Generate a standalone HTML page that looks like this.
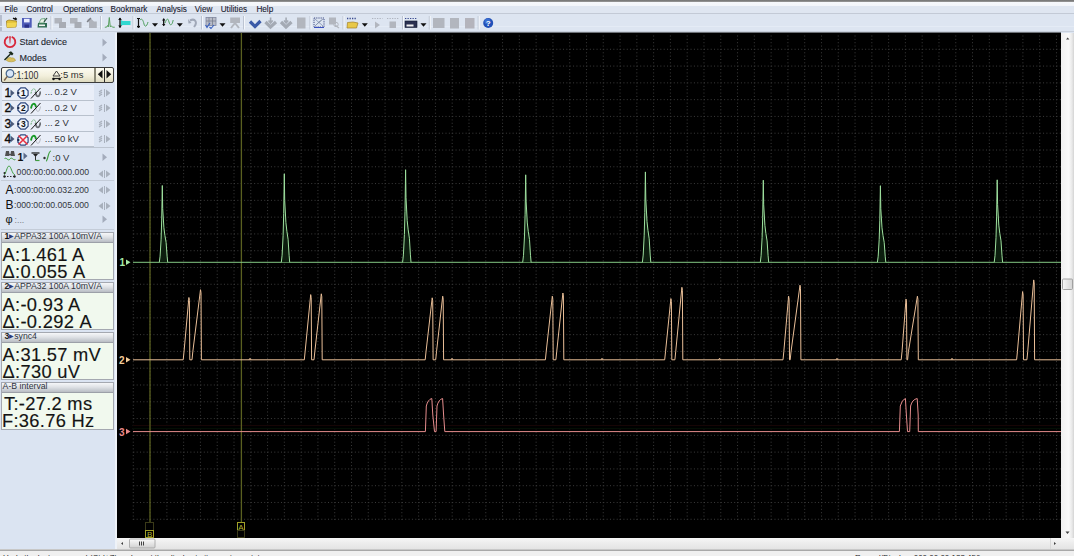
<!DOCTYPE html>
<html><head><meta charset="utf-8"><style>
*{box-sizing:border-box}
body{margin:0;width:1074px;height:556px;overflow:hidden;position:relative;background:#dbe4f2;font-family:"Liberation Sans",sans-serif;}
.a{position:absolute;white-space:nowrap}
</style></head><body>
<div class="a" style="left:0;top:0;width:1074px;height:2px;background:linear-gradient(#707070,#9a9a9a)"></div>
<div class="a" style="left:0;top:2px;width:1074px;height:11px;background:linear-gradient(#f6f8fc 0,#f2f5fa 35%,#dfe6f1 40%,#dfe6f1 100%)"></div>
<div class="a" style="left:0;top:13px;width:1074px;height:1px;background:#c3cad6"></div>
<div class="a" style="left:0;top:14px;width:1074px;height:19px;background:#dde5f1"></div>
<div class="a" style="left:4.5px;top:3.8px;font-size:8.2px;line-height:11px;color:#202030;-webkit-text-stroke:0.1px #202030">File</div><div class="a" style="left:26.4px;top:3.8px;font-size:8.2px;line-height:11px;color:#202030;-webkit-text-stroke:0.1px #202030">Control</div><div class="a" style="left:62.9px;top:3.8px;font-size:8.2px;line-height:11px;color:#202030;-webkit-text-stroke:0.1px #202030">Operations</div><div class="a" style="left:110.6px;top:3.8px;font-size:8.2px;line-height:11px;color:#202030;-webkit-text-stroke:0.1px #202030">Bookmark</div><div class="a" style="left:156.4px;top:3.8px;font-size:8.2px;line-height:11px;color:#202030;-webkit-text-stroke:0.1px #202030">Analysis</div><div class="a" style="left:194.8px;top:3.8px;font-size:8.2px;line-height:11px;color:#202030;-webkit-text-stroke:0.1px #202030">View</div><div class="a" style="left:220.7px;top:3.8px;font-size:8.2px;line-height:11px;color:#202030;-webkit-text-stroke:0.1px #202030">Utilities</div><div class="a" style="left:256.4px;top:3.8px;font-size:8.2px;line-height:11px;color:#202030;-webkit-text-stroke:0.1px #202030">Help</div>
<svg class="a" style="left:0;top:0" width="1074" height="33" viewBox="0 0 1074 33"><line x1="1" y1="15" x2="1" y2="31" stroke="#a8b0c0" stroke-width="1.5"/><line x1="0" y1="26.5" x2="1074" y2="26.5" stroke="#e4ebf5" stroke-width="1"/><line x1="0" y1="31.5" x2="1074" y2="31.5" stroke="#c8d0dc" stroke-width="1"/><path d="M6.5,21 L9,20 L12,20.5 L16.5,21 L16,27 L7,27.5 Z" fill="#e3c23a" stroke="#a08020" stroke-width="0.8"/><path d="M7,23 L17,22.5 L15.5,27 L7,27.5Z" fill="#f2d650"/><path d="M13,18.2 L16.5,19.8 M15,17.8 L16.8,19.5" stroke="#101010" stroke-width="1.4"/><rect x="22" y="18" width="9.7" height="9.7" fill="#4f5cb8"/><rect x="24" y="18.8" width="5.6" height="3.6" fill="#e8ecff"/><rect x="24.5" y="24.5" width="4.5" height="3.2" fill="#2a3088"/><path d="M38,23 L47,23 L47,27.5 L37.5,27.5Z" fill="#2f6c52"/><rect x="39" y="24.5" width="6" height="1.6" fill="#f0f4f0"/><path d="M39,23 L41,19 L45,18.5 L44,23Z" fill="#e8f0e8" stroke="#5a9a70" stroke-width="0.8"/><path d="M44,22 L47,18" stroke="#305040" stroke-width="1.2"/><line x1="51" y1="16" x2="51" y2="29.5" stroke="#bcc4d2" stroke-width="1"/><line x1="52" y1="16" x2="52" y2="29.5" stroke="#f4f7fb" stroke-width="1"/><rect x="54.5" y="18" width="7.5" height="5.5" fill="#b0b4bc"/><rect x="59.0" y="22" width="7" height="6" fill="#a8acb4"/><rect x="70" y="18" width="7.5" height="5.5" fill="#b0b4bc"/><rect x="74.5" y="22" width="7" height="6" fill="#a8acb4"/><path d="M87,20 L90,17.8 L94,21.5 L96.8,21.5 L96.8,28 L89,28 L89,22.5Z" fill="#b0b4bc"/><path d="M87,22 L91,18" stroke="#7c8088" stroke-width="1.2"/><line x1="100.5" y1="16" x2="100.5" y2="29.5" stroke="#bcc4d2" stroke-width="1"/><line x1="101.5" y1="16" x2="101.5" y2="29.5" stroke="#f4f7fb" stroke-width="1"/><path d="M104.8,27.2 L106.5,27.2 L107.5,25.5 L108.3,27 L109.3,17.5 L110.3,27 L111.3,25.8 L112.5,27.2 L114.8,27.2" fill="none" stroke="#5aa060" stroke-width="1"/><rect x="121.5" y="21" width="9" height="4" fill="#30d8d0"/><path d="M121,20 L126,23 L121,26Z" fill="#30d8d0"/><path d="M120,18 L120,27.5" stroke="#101010" stroke-width="1.3"/><path d="M118.2,20 L120,17.5 L121.8,20Z M118.2,25.5 L120,28 L121.8,25.5Z" fill="#101010"/><line x1="133" y1="16" x2="133" y2="29.5" stroke="#bcc4d2" stroke-width="1"/><line x1="134" y1="16" x2="134" y2="29.5" stroke="#f4f7fb" stroke-width="1"/><path d="M137,18.5 L140,18.5 M138.5,18.5 L138.5,26.5 M137,26.5 L140,26.5" stroke="#101010" stroke-width="1.2"/><circle cx="138.5" cy="26.8" r="1.2" fill="#101010"/><path d="M140,20 C142,18 143,20 144,24 C145,28 147,26 148,22" fill="none" stroke="#50a060" stroke-width="1"/><path d="M152,23.2 L158,23.2 L155,26.8 Z" fill="#101010"/><path d="M163.7,18.8 L163.7,25.5" stroke="#101010" stroke-width="1.3"/><path d="M162,20.5 L163.7,18.3 L165.4,20.5Z M162,24 L163.7,26.2 L165.4,24Z" fill="#101010"/><path d="M165,23 C167,18 168,18 169,22 C170,26 172,26 173.2,20" fill="none" stroke="#50a060" stroke-width="1"/><path d="M176.8,23.2 L182.8,23.2 L179.8,26.8 Z" fill="#101010"/><path d="M190,20.5 C195,18 198,22 194,27" fill="none" stroke="#a0a8b8" stroke-width="2"/><path d="M188,19 L191.5,23 L188.5,23.5Z" fill="#a0a8b8"/><line x1="201.5" y1="16" x2="201.5" y2="29.5" stroke="#bcc4d2" stroke-width="1"/><line x1="202.5" y1="16" x2="202.5" y2="29.5" stroke="#f4f7fb" stroke-width="1"/><rect x="206" y="17.5" width="10" height="8" fill="#b8bcc8" stroke="#8088a0" stroke-width="0.8"/><path d="M206,21 L216,21 M209,17.5 L209,25.5 M212.5,17.5 L212.5,25.5" stroke="#70788a" stroke-width="0.7"/><path d="M205.5,25 L207,27.5 L210,23 M209.5,27 L211,28.5 L214,25" fill="none" stroke="#3860c0" stroke-width="1.1"/><path d="M219.5,23.2 L225.5,23.2 L222.5,26.8 Z" fill="#101010"/><rect x="230.2" y="17.5" width="9.8" height="5.5" fill="#b2b6be"/><path d="M231,28 L235,23 L239,28" fill="none" stroke="#b2b6be" stroke-width="2"/><line x1="243.5" y1="16" x2="243.5" y2="29.5" stroke="#bcc4d2" stroke-width="1"/><line x1="244.5" y1="16" x2="244.5" y2="29.5" stroke="#f4f7fb" stroke-width="1"/><path d="M250,21.5 L255,26.5 L260.5,21" fill="none" stroke="#3a5aa8" stroke-width="3.2"/><path d="M265.5,22 L270.5,27 L276,22" fill="none" stroke="#a4aab4" stroke-width="3.2"/><path d="M270.6,17.5 L270.6,22 M268.5,20.5 L270.6,23 L272.7,20.5" fill="none" stroke="#a4aab4" stroke-width="1.6"/><path d="M281,22 L286,27 L291.5,22" fill="none" stroke="#a4aab4" stroke-width="3.2"/><path d="M286.1,17.5 L286.1,22 M284,20.5 L286.1,23 L288.2,20.5" fill="none" stroke="#a4aab4" stroke-width="1.6"/><rect x="297" y="17.5" width="8.5" height="11" fill="#b2b6be"/><line x1="310" y1="16" x2="310" y2="29.5" stroke="#bcc4d2" stroke-width="1"/><line x1="311" y1="16" x2="311" y2="29.5" stroke="#f4f7fb" stroke-width="1"/><rect x="314" y="18" width="10" height="9" fill="none" stroke="#2c3a78" stroke-width="0.9" stroke-dasharray="1.2 1"/><path d="M315,26 L319,22 L323,19 M315,19 L323,26" stroke="#8090b0" stroke-width="0.8"/><line x1="314" y1="27.5" x2="324" y2="27.5" stroke="#3a50c0" stroke-width="1"/><rect x="329" y="17.5" width="7" height="7" fill="#b2b6be"/><path d="M335,25 L339,28" stroke="#b2b6be" stroke-width="1.3"/><circle cx="336" cy="24.5" r="2.2" fill="none" stroke="#b2b6be" stroke-width="1"/><line x1="343" y1="16" x2="343" y2="29.5" stroke="#bcc4d2" stroke-width="1"/><line x1="344" y1="16" x2="344" y2="29.5" stroke="#f4f7fb" stroke-width="1"/><path d="M347,18.5 L357,18.5" stroke="#3a4a90" stroke-width="1.3" stroke-dasharray="1.3 1.2"/><path d="M347.5,22.5 L353,22 L358,23 L356.5,28 L347,28Z" fill="#e8c848" stroke="#a08028" stroke-width="0.7"/><path d="M361.8,23.2 L367.8,23.2 L364.8,26.8 Z" fill="#101010"/><path d="M372,18.5 L382.5,18.5" stroke="#b0b4c0" stroke-width="1.1" stroke-dasharray="1.3 1.2"/><path d="M375,21.5 L380,25 L375,28.5Z" fill="#b2b6be"/><path d="M387,18.5 L399,18.5" stroke="#b0b4c0" stroke-width="1.1" stroke-dasharray="1.3 1.2"/><rect x="389.5" y="21.5" width="6.5" height="6.5" fill="#b2b6be"/><line x1="402.5" y1="16" x2="402.5" y2="29.5" stroke="#bcc4d2" stroke-width="1"/><line x1="403.5" y1="16" x2="403.5" y2="29.5" stroke="#f4f7fb" stroke-width="1"/><path d="M405,18.5 L417,18.5" stroke="#3a4a90" stroke-width="1.1" stroke-dasharray="1.3 1.2"/><rect x="405" y="21" width="12" height="6.5" fill="#2a3050" stroke="#101830" stroke-width="0.6"/><rect x="406.5" y="24.5" width="7" height="2" fill="#f0f0f0"/><path d="M420.5,23.2 L426.5,23.2 L423.5,26.8 Z" fill="#101010"/><line x1="429.3" y1="16" x2="429.3" y2="29.5" stroke="#bcc4d2" stroke-width="1"/><line x1="430.3" y1="16" x2="430.3" y2="29.5" stroke="#f4f7fb" stroke-width="1"/><rect x="433" y="18" width="11.5" height="10" fill="#b2b6be"/><rect x="450" y="18" width="9" height="10.5" fill="#b2b6be"/><rect x="465" y="18" width="9.5" height="10.5" fill="#b4b4bc"/><line x1="478.2" y1="16" x2="478.2" y2="29.5" stroke="#bcc4d2" stroke-width="1"/><line x1="479.2" y1="16" x2="479.2" y2="29.5" stroke="#f4f7fb" stroke-width="1"/><circle cx="488.2" cy="23" r="5" fill="#2050b8"/><circle cx="487.5" cy="21.5" r="3" fill="#4a80e0" opacity="0.6"/><text x="488.2" y="26.2" font-family="Liberation Sans" font-size="8" font-weight="bold" text-anchor="middle" fill="#fff">?</text></svg>
<div class="a" style="left:114.5px;top:33px;width:2.5px;height:516px;background:#eef2f8"></div><svg class="a" style="left:3px;top:35px" width="14" height="14" viewBox="0 0 14 14">
<path d="M5.3,1.8 A5.3,5.3 0 1 0 8.7,1.8" fill="none" stroke="#d8283a" stroke-width="1.9"/>
<path d="M6.1,1.2 L7.9,1.2 L7.3,8.6 L6.7,8.6 Z" fill="#d8283a"/></svg><div class="a" style="left:19.60px;top:37.45px;font-size:9px;line-height:10.05px;color:#22262e;-webkit-text-stroke:0.1px #22262e">Start device</div><div class="a" style="left:19.60px;top:52.56px;font-size:9px;line-height:10.05px;color:#22262e;-webkit-text-stroke:0.1px #22262e">Modes</div><svg class="a" style="left:3px;top:50px" width="14" height="14" viewBox="0 0 14 14">
<path d="M3.5,10.5 C4,7.5 7,7 8.5,8 C10,7.5 12,8.5 12.5,10.5 C11,12 6,12.5 3.5,10.5 Z" fill="#d8c060" stroke="#b09838" stroke-width="0.6"/>
<path d="M1.5,10 L7.5,4" stroke="#1a2a1a" stroke-width="1.5"/>
<path d="M5.5,2.5 L8,1.2 L10.5,3.8 L9,5.5 Z" fill="#1a2a1a"/></svg><svg class="a" style="left:102px;top:38px" width="6" height="9"><path d="M0.5,0.5 L5,4.5 L0.5,8.5Z" fill="#a4acbc"/></svg><svg class="a" style="left:102px;top:53px" width="6" height="9"><path d="M0.5,0.5 L5,4.5 L0.5,8.5Z" fill="#a4acbc"/></svg><div class="a" style="left:1px;top:67px;width:113px;height:16px;border:1px solid #3c3c3c;border-radius:2px;background:linear-gradient(#fcfbf2,#f3f0dc 55%,#dedac0)"></div><div class="a" style="left:94px;top:68px;width:2px;height:14px;background:#8c8a78"></div><div class="a" style="left:104px;top:68px;width:1px;height:14px;background:#2c2c2c"></div><svg class="a" style="left:97px;top:70px" width="6" height="9"><path d="M5.5,0 L0.8,4.2 L5.5,8.4Z" fill="#101010"/></svg><svg class="a" style="left:106px;top:70px" width="6" height="9"><path d="M0.5,0 L5.2,4.2 L0.5,8.4Z" fill="#101010"/></svg><svg class="a" style="left:3px;top:68px" width="12" height="14" viewBox="0 0 12 14">
<circle cx="7" cy="5.5" r="3.8" fill="#d8e6f8" stroke="#4a6a90" stroke-width="1.3"/>
<line x1="4.3" y1="8.3" x2="1.2" y2="12.5" stroke="#7a6048" stroke-width="1.4"/></svg><div class="a" style="left:14.00px;top:69.77px;font-size:10.2px;line-height:11.39px;color:#2e2e2e;transform:scaleX(0.86);transform-origin:0 0">:1:100</div><svg class="a" style="left:52px;top:70px" width="9" height="11" viewBox="0 0 9 11">
<path d="M4.5,1 L8,6 L1,6 Z" fill="none" stroke="#404040" stroke-width="1"/>
<line x1="0.5" y1="8.5" x2="8.5" y2="8.5" stroke="#202020" stroke-width="1.2"/>
<circle cx="1.5" cy="9" r="1.2" fill="#101010"/><circle cx="7.5" cy="9" r="1.2" fill="#101010"/></svg><div class="a" style="left:60.30px;top:70.20px;font-size:9.5px;line-height:10.61px;color:#2e2e2e;">:5 ms</div><div class="a" style="left:1.5px;top:85.03px;width:92.5px;height:15.57px;background:#e9eef8;border-bottom:1px solid #b9c1cd"></div><div class="a" style="left:4.40px;top:86.57px;font-size:12px;line-height:13.40px;color:#0c0c0c;-webkit-text-stroke:0.35px #0c0c0c">1</div><svg class="a" style="left:10px;top:88.50px" width="5" height="8"><path d="M0.5,0.5 L4.5,4 L0.5,7.5Z" fill="#4a5a7a"/></svg><svg class="a" style="left:16.5px;top:86.80px" width="12" height="12" viewBox="0 0 12 12">
<path d="M3.8,0.9 L8.2,0.9 L11.1,3.8 L11.1,8.2 L8.2,11.1 L3.8,11.1 L0.9,8.2 L0.9,3.8 Z" fill="#f0f4fa" stroke="#304a80" stroke-width="1.2"/>
<circle cx="1.3" cy="6" r="1.2" fill="#1c2c50"/><text x="6.3" y="9" font-family="Liberation Sans" font-size="8.5" font-weight="bold" text-anchor="middle" fill="#101010">1</text></svg><svg class="a" style="left:30px;top:86.80px" width="11" height="12" viewBox="0 0 11 12"><path d="M5.5,5 C6.5,11 9.5,11 10.5,4.5" fill="none" stroke="#6a6e74" stroke-width="1.8"/><path d="M1,6.5 C2,0.5 5,0.5 6,5" fill="none" stroke="#50a058" stroke-width="1" stroke-dasharray="1.2 0.9"/><line x1="1" y1="11.5" x2="10.5" y2="1" stroke="#181818" stroke-width="1"/></svg><div class="a" style="left:44.80px;top:87.20px;font-size:9.5px;line-height:10.61px;color:#3a3f4a;">...</div><div class="a" style="left:54.60px;top:87.20px;font-size:9.5px;line-height:10.61px;color:#303438;">0.2 V</div><svg class="a" style="left:98px;top:88.60px" width="13" height="8" viewBox="0 0 13 8">
<path d="M1,3 L4,1 M1,5 L4,3 M1,7 L4,5" stroke="#a8b0bc" stroke-width="1.2"/>
<line x1="6.5" y1="0" x2="6.5" y2="8" stroke="#a8b0bc" stroke-width="1"/>
<path d="M8,0.5 L12.5,4 L8,7.5 Z" fill="#a8b0bc"/></svg><div class="a" style="left:1.5px;top:100.6px;width:92.5px;height:15.57px;background:#e9eef8;border-bottom:1px solid #b9c1cd"></div><div class="a" style="left:4.40px;top:102.14px;font-size:12px;line-height:13.40px;color:#0c0c0c;-webkit-text-stroke:0.35px #0c0c0c">2</div><svg class="a" style="left:10px;top:104.07px" width="5" height="8"><path d="M0.5,0.5 L4.5,4 L0.5,7.5Z" fill="#4a5a7a"/></svg><svg class="a" style="left:16.5px;top:102.37px" width="12" height="12" viewBox="0 0 12 12">
<path d="M3.8,0.9 L8.2,0.9 L11.1,3.8 L11.1,8.2 L8.2,11.1 L3.8,11.1 L0.9,8.2 L0.9,3.8 Z" fill="#f0f4fa" stroke="#304a80" stroke-width="1.2"/>
<circle cx="1.3" cy="6" r="1.2" fill="#1c2c50"/><text x="6.3" y="9" font-family="Liberation Sans" font-size="8.5" font-weight="bold" text-anchor="middle" fill="#101010">2</text></svg><svg class="a" style="left:30px;top:102.37px" width="11" height="12" viewBox="0 0 11 12"><path d="M5.5,5 C6.5,11 9.5,11 10.5,4.5" fill="none" stroke="#b0b4bc" stroke-width="0.9"/><path d="M1,6.5 C2,0.5 5,0.5 6,5" fill="none" stroke="#189a28" stroke-width="1.9"/><line x1="1" y1="11.5" x2="10.5" y2="1" stroke="#181818" stroke-width="1"/></svg><div class="a" style="left:44.80px;top:102.77px;font-size:9.5px;line-height:10.61px;color:#3a3f4a;">...</div><div class="a" style="left:54.60px;top:102.77px;font-size:9.5px;line-height:10.61px;color:#303438;">0.2 V</div><svg class="a" style="left:98px;top:104.17px" width="13" height="8" viewBox="0 0 13 8">
<path d="M1,3 L4,1 M1,5 L4,3 M1,7 L4,5" stroke="#a8b0bc" stroke-width="1.2"/>
<line x1="6.5" y1="0" x2="6.5" y2="8" stroke="#a8b0bc" stroke-width="1"/>
<path d="M8,0.5 L12.5,4 L8,7.5 Z" fill="#a8b0bc"/></svg><div class="a" style="left:1.5px;top:116.17px;width:92.5px;height:15.57px;background:#e9eef8;border-bottom:1px solid #b9c1cd"></div><div class="a" style="left:4.40px;top:117.71px;font-size:12px;line-height:13.40px;color:#0c0c0c;-webkit-text-stroke:0.35px #0c0c0c">3</div><svg class="a" style="left:10px;top:119.64px" width="5" height="8"><path d="M0.5,0.5 L4.5,4 L0.5,7.5Z" fill="#4a5a7a"/></svg><svg class="a" style="left:16.5px;top:117.94px" width="12" height="12" viewBox="0 0 12 12">
<path d="M3.8,0.9 L8.2,0.9 L11.1,3.8 L11.1,8.2 L8.2,11.1 L3.8,11.1 L0.9,8.2 L0.9,3.8 Z" fill="#f0f4fa" stroke="#304a80" stroke-width="1.2"/>
<circle cx="1.3" cy="6" r="1.2" fill="#1c2c50"/><text x="6.3" y="9" font-family="Liberation Sans" font-size="8.5" font-weight="bold" text-anchor="middle" fill="#101010">3</text></svg><svg class="a" style="left:30px;top:117.94px" width="11" height="12" viewBox="0 0 11 12"><path d="M5.5,5 C6.5,11 9.5,11 10.5,4.5" fill="none" stroke="#6a6e74" stroke-width="1.8"/><path d="M1,6.5 C2,0.5 5,0.5 6,5" fill="none" stroke="#50a058" stroke-width="1" stroke-dasharray="1.2 0.9"/><line x1="1" y1="11.5" x2="10.5" y2="1" stroke="#181818" stroke-width="1"/></svg><div class="a" style="left:44.80px;top:118.34px;font-size:9.5px;line-height:10.61px;color:#3a3f4a;">...</div><div class="a" style="left:54.60px;top:118.34px;font-size:9.5px;line-height:10.61px;color:#303438;">2 V</div><svg class="a" style="left:98px;top:119.74px" width="13" height="8" viewBox="0 0 13 8">
<path d="M1,3 L4,1 M1,5 L4,3 M1,7 L4,5" stroke="#a8b0bc" stroke-width="1.2"/>
<line x1="6.5" y1="0" x2="6.5" y2="8" stroke="#a8b0bc" stroke-width="1"/>
<path d="M8,0.5 L12.5,4 L8,7.5 Z" fill="#a8b0bc"/></svg><div class="a" style="left:1.5px;top:131.74px;width:92.5px;height:15.57px;background:#e9eef8;border-bottom:1px solid #b9c1cd"></div><div class="a" style="left:4.40px;top:133.28px;font-size:12px;line-height:13.40px;color:#0c0c0c;-webkit-text-stroke:0.35px #0c0c0c">4</div><svg class="a" style="left:10px;top:135.21px" width="5" height="8"><path d="M0.5,0.5 L4.5,4 L0.5,7.5Z" fill="#4a5a7a"/></svg><svg class="a" style="left:16.5px;top:133.51px" width="12" height="12" viewBox="0 0 12 12">
<path d="M3.8,0.9 L8.2,0.9 L11.1,3.8 L11.1,8.2 L8.2,11.1 L3.8,11.1 L0.9,8.2 L0.9,3.8 Z" fill="#f0f4fa" stroke="#304a80" stroke-width="1.2"/>
<circle cx="1.3" cy="6" r="1.2" fill="#1c2c50"/><path d="M1.5,1.5 L10.5,10.5 M10.5,1.5 L1.5,10.5" stroke="#e83040" stroke-width="1.5"/></svg><svg class="a" style="left:30px;top:133.51px" width="11" height="12" viewBox="0 0 11 12"><path d="M5.5,5 C6.5,11 9.5,11 10.5,4.5" fill="none" stroke="#b0b4bc" stroke-width="0.9"/><path d="M1,6.5 C2,0.5 5,0.5 6,5" fill="none" stroke="#189a28" stroke-width="1.9"/><line x1="1" y1="11.5" x2="10.5" y2="1" stroke="#181818" stroke-width="1"/></svg><div class="a" style="left:44.80px;top:133.91px;font-size:9.5px;line-height:10.61px;color:#3a3f4a;">...</div><div class="a" style="left:54.60px;top:133.91px;font-size:9.5px;line-height:10.61px;color:#303438;">50 kV</div><svg class="a" style="left:98px;top:135.31px" width="13" height="8" viewBox="0 0 13 8">
<path d="M1,3 L4,1 M1,5 L4,3 M1,7 L4,5" stroke="#a8b0bc" stroke-width="1.2"/>
<line x1="6.5" y1="0" x2="6.5" y2="8" stroke="#a8b0bc" stroke-width="1"/>
<path d="M8,0.5 L12.5,4 L8,7.5 Z" fill="#a8b0bc"/></svg><div class="a" style="left:1px;top:146.8px;width:113px;height:1px;background:#bcc4d0"></div><svg class="a" style="left:4px;top:149px" width="12" height="13" viewBox="0 0 12 13">
<path d="M1,7 L2,2 L5,2 L5.5,5 L6.5,5 L7,2 L10,2 L11,7 L7,7 L6,6 L5,7 Z" fill="#505050"/>
<path d="M0.5,10 C2,7 4,13 6,10 C8,7 10,13 11.5,10" fill="none" stroke="#40a040" stroke-width="1"/></svg><div class="a" style="left:17.50px;top:151.80px;font-size:10.5px;line-height:11.73px;color:#101010;font-weight:bold">1</div><svg class="a" style="left:23px;top:152px" width="5" height="8"><path d="M0.5,0.5 L4.5,4 L0.5,7.5Z" fill="#5a6a8a"/></svg><svg class="a" style="left:31px;top:151px" width="9" height="11" viewBox="0 0 9 11">
<line x1="0.5" y1="2" x2="8.5" y2="2" stroke="#202020" stroke-width="1.3"/>
<path d="M2,3 L7,3 L4.5,6 Z" fill="#202020"/><line x1="4.5" y1="5" x2="4.5" y2="9.5" stroke="#303030" stroke-width="1"/>
<path d="M4.5,9.5 L8.5,9.5" stroke="#40a040" stroke-width="1.2"/></svg><svg class="a" style="left:43px;top:150px" width="10" height="12" viewBox="0 0 10 12">
<circle cx="1.5" cy="8" r="1.2" fill="#303030"/>
<path d="M3,11 C5,11 5,1 8,1" fill="none" stroke="#40a040" stroke-width="1.2"/></svg><div class="a" style="left:52.50px;top:152.60px;font-size:9.5px;line-height:10.61px;color:#303438;">:0 V</div><svg class="a" style="left:102px;top:153px" width="6" height="9"><path d="M0.5,0.5 L5,4.2 L0.5,8Z" fill="#a4acbc"/></svg><svg class="a" style="left:3px;top:164px" width="13" height="14" viewBox="0 0 13 14">
<path d="M1,11 C3,10 4,2 6,2 C8,2 9,10 12,11" fill="none" stroke="#40a040" stroke-width="1"/>
<line x1="1" y1="12.5" x2="12" y2="12.5" stroke="#303030" stroke-width="1" stroke-dasharray="1.5 1.5"/>
<circle cx="1.5" cy="12.5" r="1.2" fill="#202020"/><circle cx="11.5" cy="12.5" r="1.2" fill="#202020"/>
<circle cx="1.5" cy="9" r="1" fill="#202020"/></svg><div class="a" style="left:16.60px;top:167.53px;font-size:8.7px;line-height:9.72px;color:#33373c;">000:00:00.000.000</div><svg class="a" style="left:98px;top:170px" width="13" height="8" viewBox="0 0 13 8">
<path d="M5,0.5 L0.5,4 L5,7.5 Z" fill="#a8b0bc"/>
<line x1="6.5" y1="0" x2="6.5" y2="8" stroke="#a8b0bc" stroke-width="1"/>
<path d="M8,0.5 L12.5,4 L8,7.5 Z" fill="#a8b0bc"/></svg><div class="a" style="left:1px;top:179.8px;width:113px;height:1px;background:#c4ccd8"></div><div class="a" style="left:5.40px;top:183.54px;font-size:12px;line-height:13.40px;color:#101010;">A</div><div class="a" style="left:14.00px;top:185.73px;font-size:8.7px;line-height:9.72px;color:#33373c;">:000:00:00.032.200</div><div class="a" style="left:5.60px;top:199.14px;font-size:12px;line-height:13.40px;color:#101010;">B</div><div class="a" style="left:14.00px;top:201.33px;font-size:8.7px;line-height:9.72px;color:#33373c;">:000:00:00.005.000</div><div class="a" style="left:5.40px;top:212.54px;font-size:11px;line-height:12.29px;color:#101010;">φ</div><div class="a" style="left:14.60px;top:215.63px;font-size:8.7px;line-height:9.72px;color:#7a8088;">:...</div><svg class="a" style="left:98px;top:186px" width="13" height="8" viewBox="0 0 13 8">
<path d="M5,0.5 L0.5,4 L5,7.5 Z" fill="#a8b0bc"/>
<line x1="6.5" y1="0" x2="6.5" y2="8" stroke="#a8b0bc" stroke-width="1"/>
<path d="M8,0.5 L12.5,4 L8,7.5 Z" fill="#a8b0bc"/></svg><svg class="a" style="left:98px;top:201.5px" width="13" height="8" viewBox="0 0 13 8">
<path d="M5,0.5 L0.5,4 L5,7.5 Z" fill="#a8b0bc"/>
<line x1="6.5" y1="0" x2="6.5" y2="8" stroke="#a8b0bc" stroke-width="1"/>
<path d="M8,0.5 L12.5,4 L8,7.5 Z" fill="#a8b0bc"/></svg><svg class="a" style="left:102px;top:215px" width="6" height="9"><path d="M0.5,0.5 L5,4.2 L0.5,8Z" fill="#a4acbc"/></svg><div class="a" style="left:1px;top:229px;width:113px;height:1px;background:#c4ccd8"></div><div class="a" style="left:1px;top:231.5px;width:113px;height:48px;border:1px solid #a4a8b0;background:#f1f9ee"></div><div class="a" style="left:2px;top:232.5px;width:111px;height:10.5px;background:linear-gradient(#f6f7f9,#dfe2e6 45%,#b9bdc4);border-bottom:1px solid #9ca0a8"></div><div class="a" style="left:4.40px;top:231.93px;font-size:8.7px;line-height:9.72px;color:#2c3240;"><b style="color:#111">1</b><span style="font-size:6px;color:#2a3a78;position:relative;top:-1px">▶</span>APPA32 100A 10mV/A</div><div class="a" style="left:2.60px;top:244.94px;font-size:18.3px;line-height:20.44px;color:#141414;-webkit-text-stroke:0.15px #141414;letter-spacing:0.3px">A:1.461 A</div><div class="a" style="left:2.60px;top:262.34px;font-size:18.3px;line-height:20.44px;color:#141414;-webkit-text-stroke:0.15px #141414;letter-spacing:0.3px">Δ:0.055 A</div><div class="a" style="left:1px;top:281.5px;width:113px;height:48px;border:1px solid #a4a8b0;background:#f1f9ee"></div><div class="a" style="left:2px;top:282.5px;width:111px;height:10.5px;background:linear-gradient(#f6f7f9,#dfe2e6 45%,#b9bdc4);border-bottom:1px solid #9ca0a8"></div><div class="a" style="left:4.40px;top:281.93px;font-size:8.7px;line-height:9.72px;color:#2c3240;"><b style="color:#222">2</b><span style="font-size:6px;color:#2a3a78;position:relative;top:-1px">▶</span>APPA32 100A 10mV/A</div><div class="a" style="left:2.60px;top:294.94px;font-size:18.3px;line-height:20.44px;color:#141414;-webkit-text-stroke:0.15px #141414;letter-spacing:0.3px">A:-0.93 A</div><div class="a" style="left:2.60px;top:312.34px;font-size:18.3px;line-height:20.44px;color:#141414;-webkit-text-stroke:0.15px #141414;letter-spacing:0.3px">Δ:-0.292 A</div><div class="a" style="left:1px;top:331.5px;width:113px;height:48px;border:1px solid #a4a8b0;background:#f1f9ee"></div><div class="a" style="left:2px;top:332.5px;width:111px;height:10.5px;background:linear-gradient(#f6f7f9,#dfe2e6 45%,#b9bdc4);border-bottom:1px solid #9ca0a8"></div><div class="a" style="left:4.40px;top:331.93px;font-size:8.7px;line-height:9.72px;color:#2c3240;"><b style="color:#222">3</b><span style="font-size:6px;color:#2a3a78;position:relative;top:-1px">▶</span>sync4</div><div class="a" style="left:2.60px;top:344.94px;font-size:18.3px;line-height:20.44px;color:#141414;-webkit-text-stroke:0.15px #141414;letter-spacing:0.3px">A:31.57 mV</div><div class="a" style="left:2.60px;top:362.34px;font-size:18.3px;line-height:20.44px;color:#141414;-webkit-text-stroke:0.15px #141414;letter-spacing:0.3px">Δ:730 uV</div><div class="a" style="left:1px;top:381.5px;width:113px;height:48px;border:1px solid #a4a8b0;background:#f1f9ee"></div><div class="a" style="left:2px;top:382.5px;width:111px;height:10.5px;background:linear-gradient(#f6f7f9,#dfe2e6 45%,#b9bdc4);border-bottom:1px solid #9ca0a8"></div><div class="a" style="left:2.60px;top:381.93px;font-size:8.7px;line-height:9.72px;color:#2c3240;">A-B interval</div><div class="a" style="left:4.00px;top:393.94px;font-size:18.3px;line-height:20.44px;color:#141414;-webkit-text-stroke:0.15px #141414;letter-spacing:0.3px">T:-27.2 ms</div><div class="a" style="left:2.00px;top:411.34px;font-size:18.3px;line-height:20.44px;color:#141414;-webkit-text-stroke:0.15px #141414;letter-spacing:0.3px">F:36.76 Hz</div>
<svg style="position:absolute;left:0;top:0" width="1074" height="556" viewBox="0 0 1074 556">
<rect x="117" y="32.5" width="944" height="505.5" fill="#000"/>
<g stroke="#3c3c3c" stroke-width="1" stroke-dasharray="1 2.357"><line x1="133.28" y1="35.5" x2="133.28" y2="520" /><line x1="150.07" y1="35.5" x2="150.07" y2="520" /><line x1="166.86" y1="35.5" x2="166.86" y2="520" /><line x1="183.64" y1="35.5" x2="183.64" y2="520" /><line x1="200.43" y1="35.5" x2="200.43" y2="520" /><line x1="217.21" y1="35.5" x2="217.21" y2="520" /><line x1="234.00" y1="35.5" x2="234.00" y2="520" /><line x1="250.78" y1="35.5" x2="250.78" y2="520" /><line x1="267.56" y1="35.5" x2="267.56" y2="520" /><line x1="284.35" y1="35.5" x2="284.35" y2="520" /><line x1="301.13" y1="35.5" x2="301.13" y2="520" /><line x1="317.92" y1="35.5" x2="317.92" y2="520" /><line x1="334.71" y1="35.5" x2="334.71" y2="520" /><line x1="351.49" y1="35.5" x2="351.49" y2="520" /><line x1="368.27" y1="35.5" x2="368.27" y2="520" /><line x1="385.06" y1="35.5" x2="385.06" y2="520" /><line x1="401.85" y1="35.5" x2="401.85" y2="520" /><line x1="418.63" y1="35.5" x2="418.63" y2="520" /><line x1="435.42" y1="35.5" x2="435.42" y2="520" /><line x1="452.20" y1="35.5" x2="452.20" y2="520" /><line x1="468.99" y1="35.5" x2="468.99" y2="520" /><line x1="485.77" y1="35.5" x2="485.77" y2="520" /><line x1="502.56" y1="35.5" x2="502.56" y2="520" /><line x1="519.34" y1="35.5" x2="519.34" y2="520" /><line x1="536.12" y1="35.5" x2="536.12" y2="520" /><line x1="552.91" y1="35.5" x2="552.91" y2="520" /><line x1="569.69" y1="35.5" x2="569.69" y2="520" /><line x1="586.48" y1="35.5" x2="586.48" y2="520" /><line x1="603.26" y1="35.5" x2="603.26" y2="520" /><line x1="620.05" y1="35.5" x2="620.05" y2="520" /><line x1="636.84" y1="35.5" x2="636.84" y2="520" /><line x1="653.62" y1="35.5" x2="653.62" y2="520" /><line x1="670.40" y1="35.5" x2="670.40" y2="520" /><line x1="687.19" y1="35.5" x2="687.19" y2="520" /><line x1="703.98" y1="35.5" x2="703.98" y2="520" /><line x1="720.76" y1="35.5" x2="720.76" y2="520" /><line x1="737.54" y1="35.5" x2="737.54" y2="520" /><line x1="754.33" y1="35.5" x2="754.33" y2="520" /><line x1="771.12" y1="35.5" x2="771.12" y2="520" /><line x1="787.90" y1="35.5" x2="787.90" y2="520" /><line x1="804.69" y1="35.5" x2="804.69" y2="520" /><line x1="821.47" y1="35.5" x2="821.47" y2="520" /><line x1="838.25" y1="35.5" x2="838.25" y2="520" /><line x1="855.04" y1="35.5" x2="855.04" y2="520" /><line x1="871.83" y1="35.5" x2="871.83" y2="520" /><line x1="888.61" y1="35.5" x2="888.61" y2="520" /><line x1="905.39" y1="35.5" x2="905.39" y2="520" /><line x1="922.18" y1="35.5" x2="922.18" y2="520" /><line x1="938.97" y1="35.5" x2="938.97" y2="520" /><line x1="955.75" y1="35.5" x2="955.75" y2="520" /><line x1="972.53" y1="35.5" x2="972.53" y2="520" /><line x1="989.32" y1="35.5" x2="989.32" y2="520" /><line x1="1006.11" y1="35.5" x2="1006.11" y2="520" /><line x1="1022.89" y1="35.5" x2="1022.89" y2="520" /><line x1="1039.67" y1="35.5" x2="1039.67" y2="520" /><line x1="1056.46" y1="35.5" x2="1056.46" y2="520" /><line x1="133.3" y1="49.28" x2="1061" y2="49.28" /><line x1="133.3" y1="66.07" x2="1061" y2="66.07" /><line x1="133.3" y1="82.86" x2="1061" y2="82.86" /><line x1="133.3" y1="99.64" x2="1061" y2="99.64" /><line x1="133.3" y1="116.42" x2="1061" y2="116.42" /><line x1="133.3" y1="133.21" x2="1061" y2="133.21" /><line x1="133.3" y1="150.00" x2="1061" y2="150.00" /><line x1="133.3" y1="166.78" x2="1061" y2="166.78" /><line x1="133.3" y1="183.56" x2="1061" y2="183.56" /><line x1="133.3" y1="200.35" x2="1061" y2="200.35" /><line x1="133.3" y1="217.13" x2="1061" y2="217.13" /><line x1="133.3" y1="233.92" x2="1061" y2="233.92" /><line x1="133.3" y1="250.71" x2="1061" y2="250.71" /><line x1="133.3" y1="267.49" x2="1061" y2="267.49" /><line x1="133.3" y1="284.27" x2="1061" y2="284.27" /><line x1="133.3" y1="301.06" x2="1061" y2="301.06" /><line x1="133.3" y1="317.85" x2="1061" y2="317.85" /><line x1="133.3" y1="334.63" x2="1061" y2="334.63" /><line x1="133.3" y1="351.42" x2="1061" y2="351.42" /><line x1="133.3" y1="368.20" x2="1061" y2="368.20" /><line x1="133.3" y1="384.99" x2="1061" y2="384.99" /><line x1="133.3" y1="401.77" x2="1061" y2="401.77" /><line x1="133.3" y1="418.56" x2="1061" y2="418.56" /><line x1="133.3" y1="435.34" x2="1061" y2="435.34" /><line x1="133.3" y1="452.12" x2="1061" y2="452.12" /><line x1="133.3" y1="468.91" x2="1061" y2="468.91" /><line x1="133.3" y1="485.69" x2="1061" y2="485.69" /><line x1="133.3" y1="502.48" x2="1061" y2="502.48" /><line x1="133.3" y1="519.26" x2="1061" y2="519.26" /></g>
<line x1="133" y1="425.5" x2="1061" y2="425.5" stroke="#160505" stroke-width="1"/>
<line x1="133" y1="428.5" x2="1061" y2="428.5" stroke="#040e04" stroke-width="1"/>
<line x1="150" y1="33" x2="150" y2="522" stroke="#5a6020" stroke-width="1.3"/>
<line x1="241.4" y1="33" x2="241.4" y2="522" stroke="#5a6020" stroke-width="1.3"/>
<line x1="133" y1="262.3" x2="1061" y2="262.3" stroke="#84c884" stroke-width="1"/><path d="M159.30,262.30 L160.10,256.16 L161.10,239.26 L161.70,220.06 L162.30,185.50 L162.70,208.54 L163.90,227.74 L164.90,235.42 L166.10,242.33 L167.10,256.16 L167.70,262.30" fill="#0c1e0e" stroke="#9ee09e" stroke-width="1" stroke-linejoin="round"/><path d="M281.30,262.30 L282.10,255.22 L283.10,235.75 L283.70,213.62 L284.30,173.80 L284.70,200.35 L285.90,222.48 L286.90,231.33 L288.10,239.29 L289.10,255.22 L289.70,262.30" fill="#0c1e0e" stroke="#9ee09e" stroke-width="1" stroke-linejoin="round"/><path d="M402.60,262.30 L403.40,254.89 L404.40,234.52 L405.00,211.37 L405.60,169.70 L406.00,197.48 L407.20,220.63 L408.20,229.89 L409.40,238.22 L410.40,254.89 L411.00,262.30" fill="#0c1e0e" stroke="#9ee09e" stroke-width="1" stroke-linejoin="round"/><path d="M522.70,262.30 L523.50,255.30 L524.50,236.05 L525.10,214.18 L525.70,174.80 L526.10,201.05 L527.30,222.93 L528.30,231.68 L529.50,239.55 L530.50,255.30 L531.10,262.30" fill="#0c1e0e" stroke="#9ee09e" stroke-width="1" stroke-linejoin="round"/><path d="M642.40,262.30 L643.20,255.07 L644.20,235.18 L644.80,212.58 L645.40,171.90 L645.80,199.02 L647.00,221.62 L648.00,230.66 L649.20,238.80 L650.20,255.07 L650.80,262.30" fill="#0c1e0e" stroke="#9ee09e" stroke-width="1" stroke-linejoin="round"/><path d="M760.30,262.30 L761.10,255.73 L762.10,237.67 L762.70,217.14 L763.30,180.20 L763.70,204.83 L764.90,225.35 L765.90,233.56 L767.10,240.95 L768.10,255.73 L768.70,262.30" fill="#0c1e0e" stroke="#9ee09e" stroke-width="1" stroke-linejoin="round"/><path d="M877.40,262.30 L878.20,256.17 L879.20,239.32 L879.80,220.17 L880.40,185.70 L880.80,208.68 L882.00,227.83 L883.00,235.49 L884.20,242.38 L885.20,256.17 L885.80,262.30" fill="#0c1e0e" stroke="#9ee09e" stroke-width="1" stroke-linejoin="round"/><path d="M994.20,262.30 L995.00,255.70 L996.00,237.55 L996.60,216.93 L997.20,179.80 L997.60,204.55 L998.80,225.18 L999.80,233.43 L1001.00,240.85 L1002.00,255.70 L1002.60,262.30" fill="#0c1e0e" stroke="#9ee09e" stroke-width="1" stroke-linejoin="round"/>
<path d="M133,359.8 L183.2,359.8 L184.0,351.8 L188.9,297.5 L189.4,300.5 L189.8,359.8 L192.0,359.8 L192.8,351.8 L200.5,289.7 L201.0,292.7 L201.4,359.8 L304.3,359.8 L305.1,351.8 L310.7,294.6 L311.2,297.6 L311.6,359.8 L314.0,359.8 L314.8,351.8 L321.3,293.8 L321.8,296.8 L322.2,359.8 L425.2,359.8 L426.0,351.8 L432.2,297.8 L432.7,300.8 L433.1,359.8 L435.7,359.8 L436.5,351.8 L442.7,296.2 L443.2,299.2 L443.6,359.8 L545.4,359.8 L546.2,351.8 L552.3,296.2 L552.8,299.2 L553.2,359.8 L555.9,359.8 L556.7,351.8 L562.9,293.0 L563.4,296.0 L563.8,359.8 L664.7,359.8 L665.5,351.8 L670.9,298.6 L671.4,301.6 L671.8,359.8 L674.9,359.8 L675.7,351.8 L681.9,287.3 L682.4,290.3 L682.8,359.8 L783.0,359.8 L783.8,351.8 L788.6,296.2 L789.1,299.2 L789.5,359.8 L790.2,359.8 L791.0,351.8 L800.0,285.2 L800.5,288.2 L800.9,359.8 L901.2,359.8 L902.0,351.8 L906.0,299.1 L906.5,302.1 L906.9,359.8 L907.6,359.8 L908.4,351.8 L917.4,296.2 L917.9,299.2 L918.3,359.8 L1016.6,359.8 L1017.4,351.8 L1022.6,291.6 L1023.1,294.6 L1023.5,359.8 L1026.9,359.8 L1027.7,351.8 L1033.7,279.9 L1034.2,282.9 L1034.6,359.8 L1061,359.8 M249,359.8 L250,358.3 L251,359.8 M451,359.8 L452,358.3 L453,359.8 M601,359.8 L602,358.3 L603,359.8 M718.5,359.8 L719.5,358.3 L720.5,359.8 M836,359.8 L837,358.3 L838,359.8 M951,359.8 L952,358.3 L953,359.8" fill="none" stroke="#eabf98" stroke-width="1"/>
<path d="M133,431.6 L425.4,431.6 L426.3,406 Q427.9,399.5 431.8,398.5 L432.8,415 L434.5,431.6 L436.1,431.6 L437.0,406 Q438.6,399.5 442.6,398.5 L443.6,415 L444.8,431.6 L899.4,431.6 L900.3,406 Q901.9,399.5 905.4,398.5 L906.4,415 L907.5,431.6 L909.7,431.6 L910.6,406 Q912.2,399.5 917.2,398.5 L918.2,415 L918.3,431.6 L1061,431.6" fill="none" stroke="#e48c8c" stroke-width="1"/>
<text x="119.5" y="266" font-family="Liberation Sans" font-size="10" font-weight="bold" fill="#a8eca8">1</text>
<path d="M126,259.5 L130.5,262.3 L126,265 Z" fill="#a8eca8"/>
<text x="119" y="364" font-family="Liberation Sans" font-size="10" font-weight="bold" fill="#f4cc98">2</text>
<path d="M126,357 L130.5,359.8 L126,362.5 Z" fill="#f4cc98"/>
<text x="119" y="435.5" font-family="Liberation Sans" font-size="10" font-weight="bold" fill="#ec8a8a">3</text>
<path d="M126,428.8 L130.5,431.6 L126,434.3 Z" fill="#ec8a8a"/>
<rect x="237.5" y="522.5" width="7" height="8" fill="none" stroke="#a0a028" stroke-width="1"/>
<text x="238.3" y="529.8" font-family="Liberation Sans" font-size="8" fill="#b4b430">A</text>
<rect x="237.5" y="530.5" width="7" height="7" fill="none" stroke="#3a3a18" stroke-width="1"/>
<rect x="145.5" y="522.5" width="8" height="8" fill="none" stroke="#3a3a18" stroke-width="1"/>
<rect x="145.5" y="530.5" width="8" height="7" fill="none" stroke="#a0a028" stroke-width="1"/>
<text x="147" y="537" font-family="Liberation Sans" font-size="8" fill="#b4b430">B</text>
</svg>
<div class="a" style="left:1061px;top:33px;width:13px;height:505px;background:linear-gradient(90deg,#f0f0f0,#fafafa 60%,#e8e8e8 85%,#d4d4d4)"></div><svg class="a" style="left:1061px;top:33px" width="13" height="505" viewBox="0 0 13 505"><path d="M5,6.5 L6.7,4.5 L8.4,6.5Z" fill="#404040"/><rect x="1.5" y="246" width="10" height="10.5" rx="1" fill="url(#th)" stroke="#9a9a9a" stroke-width="0.9"/><defs><linearGradient id="th" x1="0" x2="1"><stop offset="0" stop-color="#f8f8f8"/><stop offset="1" stop-color="#d4d4d4"/></linearGradient></defs><path d="M4.5,498.5 L8.5,498.5 L6.5,501Z" fill="#404040"/></svg><div class="a" style="left:117px;top:538px;width:957px;height:11px;background:linear-gradient(#f6f6f6,#ececec 50%,#e4e4e4)"></div><svg class="a" style="left:117px;top:538px" width="957" height="11" viewBox="0 0 957 11"><path d="M6,4 L4,5.5 L6,7Z" fill="#404040"/><rect x="12.5" y="1" width="25.5" height="9" rx="1" fill="url(#th2)" stroke="#a0a0a0" stroke-width="0.8"/><defs><linearGradient id="th2" x1="0" x2="0" y1="0" y2="1"><stop offset="0" stop-color="#fafafa"/><stop offset="1" stop-color="#d0d0d0"/></linearGradient></defs><path d="M22.5,3.5 L22.5,7.5 M24.5,3.5 L24.5,7.5 M26.5,3.5 L26.5,7.5" stroke="#303030" stroke-width="0.9"/><line x1="933.5" y1="0" x2="933.5" y2="11" stroke="#d8d8d8"/><path d="M937,4 L939,5.5 L937,7Z" fill="#404040"/></svg><div class="a" style="left:0;top:549px;width:1074px;height:1px;background:#c8c8c8"></div><div class="a" style="left:0;top:550px;width:1074px;height:1px;background:#a8a8a8"></div><div class="a" style="left:0;top:551px;width:1074px;height:5px;background:#f0f0f0;overflow:hidden"><div class="a" style="left:3px;top:2px;font-size:8px;line-height:9px;color:#202020">Undo the last command (Ctrl+Z) and reset the display to its previous state</div><div class="a" style="left:855px;top:2px;font-size:8px;line-height:9px;color:#202020">Record/Display: 000:00:00.123.456</div></div>
</body></html>
